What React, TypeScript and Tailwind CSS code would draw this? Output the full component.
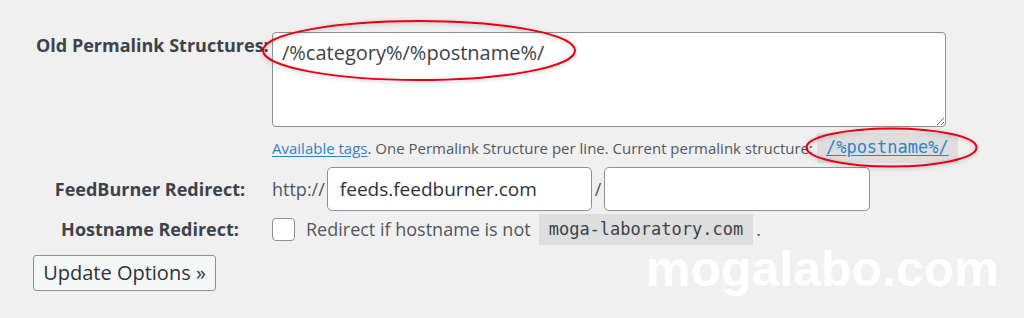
import React from "react";

const sans = { fontFamily: '"Open Sans", "Noto Sans", sans-serif' };

export default function App() {
  return (
    <div
      className="relative w-[1024px] h-[318px] overflow-hidden bg-[#f0f0f1] text-[#50575e]"
      style={sans}
    >
      <div className="pt-[32px]">
        {/* Row 1 */}
        <div className="flex pl-[36px]">
          <div className="w-[228px] shrink-0 text-center text-[18px] leading-[26px] font-bold text-[#3c434a] whitespace-nowrap">
            Old Permalink Structures:
          </div>
          <div className="ml-[8px] flex flex-col">
            <textarea
              readOnly
              defaultValue="/%category%/%postname%/"
              className="block w-[674px] h-[95px] rounded-[4px] border border-[#8c8f94] bg-white px-[9px] pt-[5px] text-[20px] leading-[30px] text-[#3c434a] outline-none"
              style={sans}
            />
            <div className="mt-[6px] flex h-[30px] items-center text-[15px] text-[#50575e] whitespace-nowrap">
              <span className="text-[#3582c4] underline underline-offset-2">Available tags</span>
              <span>. One Permalink Structure per line. Current permalink structure:</span>
              <span className="ml-[4px] flex h-[30px] items-center bg-[#dedede] px-[9px]">
                <span
                  className="text-[17px] text-[#3582c4] underline underline-offset-2"
                  style={{ fontFamily: '"DejaVu Sans Mono", "Liberation Mono", monospace' }}
                >
                  /%postname%/
                </span>
              </span>
            </div>
          </div>
        </div>

        {/* Row 2 */}
        <div className="mt-[4px] flex items-center pl-[36px]">
          <div className="w-[228px] shrink-0 text-center text-[18px] font-bold text-[#3c434a] whitespace-nowrap">
            FeedBurner Redirect:
          </div>
          <div className="ml-[8px] flex items-center text-[18px]">
            <span>http://</span>
            <input
              readOnly
              defaultValue="feeds.feedburner.com"
              className="ml-[2px] h-[44px] w-[265px] rounded-[5px] border border-[#8c8f94] bg-white px-[12px] text-[19px] text-[#2c3338] outline-none"
              style={sans}
            />
            <span className="mx-[3px]">/</span>
            <input
              readOnly
              defaultValue=""
              className="h-[44px] w-[266px] rounded-[5px] border border-[#8c8f94] bg-white px-[12px] text-[19px] outline-none"
              style={sans}
            />
          </div>
        </div>

        {/* Row 3 */}
        <div className="mt-[2px] flex h-[33px] items-center pl-[36px]">
          <div className="w-[228px] shrink-0 text-center text-[18px] font-bold text-[#3c434a] whitespace-nowrap">
            Hostname Redirect:
          </div>
          <div className="ml-[8px] flex items-center text-[18px]">
            <span className="h-[23px] w-[23px] rounded-[4px] border border-[#8c8f94] bg-white" />
            <span className="ml-[11px]">Redirect if hostname is not</span>
            <span className="ml-[8px] flex h-[31px] items-center bg-[#dedede] px-[10px]">
              <span
                className="text-[17px] text-[#3c434a]"
                style={{ fontFamily: '"DejaVu Sans Mono", "Liberation Mono", monospace' }}
              >
                moga-laboratory.com
              </span>
            </span>
            <span className="ml-[3px]">.</span>
          </div>
        </div>

        {/* Button */}
        <div className="mt-[9px] pl-[33px]">
          <button
            className="h-[36px] w-[183px] rounded-[3px] border border-[#8c8f94] bg-[#f6f7f7] text-[20px] text-[#2c3338]"
            style={sans}
          >
            Update Options »
          </button>
        </div>
      </div>

      {/* Red annotation ellipses */}
      <svg
        className="pointer-events-none absolute left-0 top-0"
        width="1024"
        height="318"
        viewBox="0 0 1024 318"
      >
        <defs>
          <filter id="sh" x="-20%" y="-50%" width="140%" height="200%">
            <feDropShadow dx="0" dy="1" stdDeviation="2" floodColor="#000" floodOpacity="0.25" />
          </filter>
        </defs>
        <ellipse cx="419" cy="50.5" rx="156" ry="29.5" fill="none" stroke="#e60012" strokeWidth="2" filter="url(#sh)" />
        <ellipse cx="891.5" cy="147.5" rx="85" ry="19" fill="none" stroke="#e60012" strokeWidth="2" filter="url(#sh)" />
      </svg>

      {/* Watermark */}
      <div
        className="pointer-events-none absolute left-[646px] top-[239px] text-[50px] font-bold leading-[60px] text-white"
        style={{ fontFamily: '"Liberation Sans", Arial, sans-serif' }}
      >
        mogalabo.com
      </div>
    </div>
  );
}
